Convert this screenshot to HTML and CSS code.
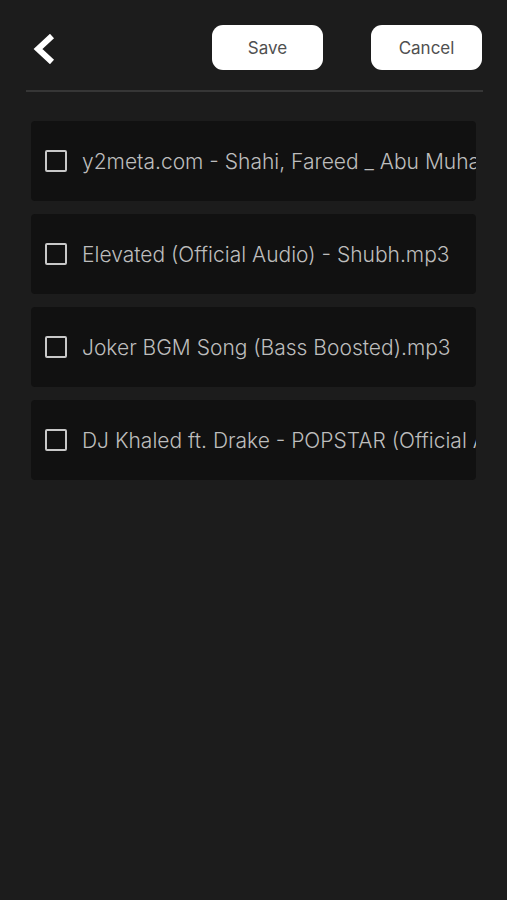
FILE: index.html
```html
<!DOCTYPE html>
<html lang="en">
<head>
  <meta charset="UTF-8" />
  <meta name="viewport" content="width=device-width, initial-scale=1.0" />
  <title>Select Songs</title>
  <link rel="stylesheet" href="styles.css">
</head>
<body>
  <div class="topbar">
    <button class="back" aria-label="Back">
      <svg width="26" height="30" viewBox="0 0 26 30">
        <polyline points="21,2 7,15 21,28" fill="none" stroke="#fff" stroke-width="6" stroke-linejoin="miter" stroke-linecap="butt" />
      </svg>
    </button>
    <div class="actions">
      <button class="pill">Save</button>
      <button class="pill">Cancel</button>
    </div>
  </div>
  <div class="divider"></div>

  <ul class="songs">
    <li class="song"><span class="box"></span><span class="name">y2meta.com - Shahi, Fareed _ Abu Muhammad (Official Audio).mp3</span></li>
    <li class="song"><span class="box"></span><span class="name">Elevated (Official Audio) - Shubh.mp3</span></li>
    <li class="song"><span class="box"></span><span class="name">Joker BGM Song (Bass Boosted).mp3</span></li>
    <li class="song"><span class="box"></span><span class="name">DJ Khaled ft. Drake - POPSTAR (Official Audio).mp3</span></li>
  </ul>
</body>
</html>
```

FILE: styles.css
```css
body {
  margin: 0;
  background-color: #1c1c1c;
  font-family: 'Inter', 'Noto Sans', sans-serif;
  color: #b8b8b8;
}

.topbar {
  display: flex;
  align-items: center;
  justify-content: space-between;
  padding: 25px 25px 0 31px;
  height: 45px;
}

.back {
  background: none;
  border: none;
  padding: 0;
  margin-top: 2px;
  width: 26px;
  height: 30px;
  cursor: pointer;
}

.actions {
  display: flex;
  gap: 48px;
}

.pill {
  width: 111px;
  height: 45px;
  background: #fff;
  border: none;
  border-radius: 11px;
  font-family: 'Inter', 'Noto Sans', sans-serif;
  font-size: 17px;
  color: #505050;
  cursor: pointer;
}

.divider {
  height: 2px;
  background: #363636;
  margin: 20px 24px 0 26px;
}

.songs {
  list-style: none;
  margin: 29px 31px 0 31px;
  padding: 0;
  display: flex;
  flex-direction: column;
  gap: 13px;
}

.song {
  display: flex;
  align-items: center;
  height: 80px;
  background: #111;
  border-radius: 4px;
  padding-left: 14px;
  overflow: hidden;
}

.box {
  flex: none;
  width: 18px;
  height: 18px;
  border: 2px solid #c8c8c8;
  border-radius: 2px;
  margin-right: 15px;
}

.name {
  white-space: nowrap;
  font-size: 21px;
  font-weight: 300;
  color: #bdbdbd;
}
```
